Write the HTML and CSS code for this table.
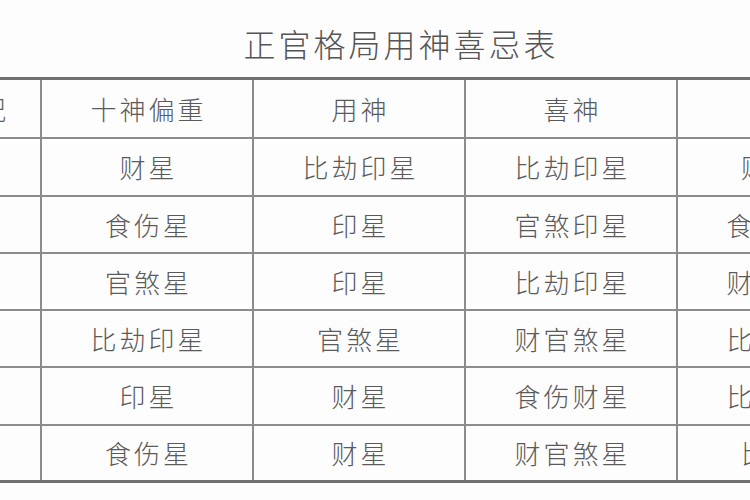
FILE: index.html
```html
<!DOCTYPE html>
<html lang="zh-CN">
<head>
<meta charset="utf-8">
<title>正官格局用神喜忌表</title>
<link rel="stylesheet" href="styles.css">
</head>
<body>
<div class="page">
  <h1 class="title">正官格局用神喜忌表</h1>
  <table class="tbl">
    <colgroup>
      <col class="c"><col class="c"><col class="c"><col class="c"><col class="c">
    </colgroup>
    <thead>
      <tr class="hrow">
        <th>日元旺衰况</th><th>十神偏重</th><th>用神</th><th>喜神</th><th>忌神</th>
      </tr>
    </thead>
    <tbody>
      <tr class="ra"><td>身强</td><td>财星</td><td>比劫印星</td><td>比劫印星</td><td>财官星</td></tr>
      <tr class="rb"><td>身强</td><td>食伤星</td><td>印星</td><td>官煞印星</td><td>食伤财星</td></tr>
      <tr class="rb"><td>身强</td><td>官煞星</td><td>印星</td><td>比劫印星</td><td>财官煞星</td></tr>
      <tr class="rb"><td>身弱</td><td>比劫印星</td><td>官煞星</td><td>财官煞星</td><td>比劫印星</td></tr>
      <tr class="ra"><td>身弱</td><td>印星</td><td>财星</td><td>食伤财星</td><td>比劫印星</td></tr>
      <tr class="rb"><td>身弱</td><td>食伤星</td><td>财星</td><td>财官煞星</td><td>比劫星</td></tr>
    </tbody>
  </table>
</div>
</body>
</html>
```

FILE: styles.css
```css
html, body {
  margin: 0;
  padding: 0;
  background: #fdfdfd;
}
body {
  width: 750px;
  height: 500px;
  overflow: hidden;
  font-family: "Noto Sans CJK SC", "Noto Sans CJK JP", sans-serif;
  color: #5e5e5e;
}
.page {
  width: 750px;
  height: 500px;
  overflow: hidden;
}
.title {
  margin: 0;
  height: 77px;
  box-sizing: border-box;
  padding: 23px 0 0 52px;
  text-align: center;
  font-size: 32px;
  line-height: 40px;
  font-weight: 300;
  letter-spacing: 3px;
  color: #555;
}
.tbl {
  margin-left: -172px;
  width: 1060px;
  table-layout: fixed;
  border-collapse: collapse;
  border-top: 3px solid #727272;
  border-bottom: 3px solid #727272;
}
.c {
  width: 212px;
}
.tbl th, .tbl td {
  border-left: 2px solid #8c8c8c;
  border-right: 2px solid #8c8c8c;
  border-bottom: 2px solid #8c8c8c;
  padding: 0 0 0 3px;
  text-align: center;
  vertical-align: middle;
  font-size: 26px;
  font-weight: 300;
  letter-spacing: 3px;
  color: #5a5a5a;
  white-space: nowrap;
}
.tbl tbody tr:last-child td {
  border-bottom: 0;
}
.hrow {
  height: 59px;
}
.ra {
  height: 58px;
}
.rb {
  height: 57px;
}
```
